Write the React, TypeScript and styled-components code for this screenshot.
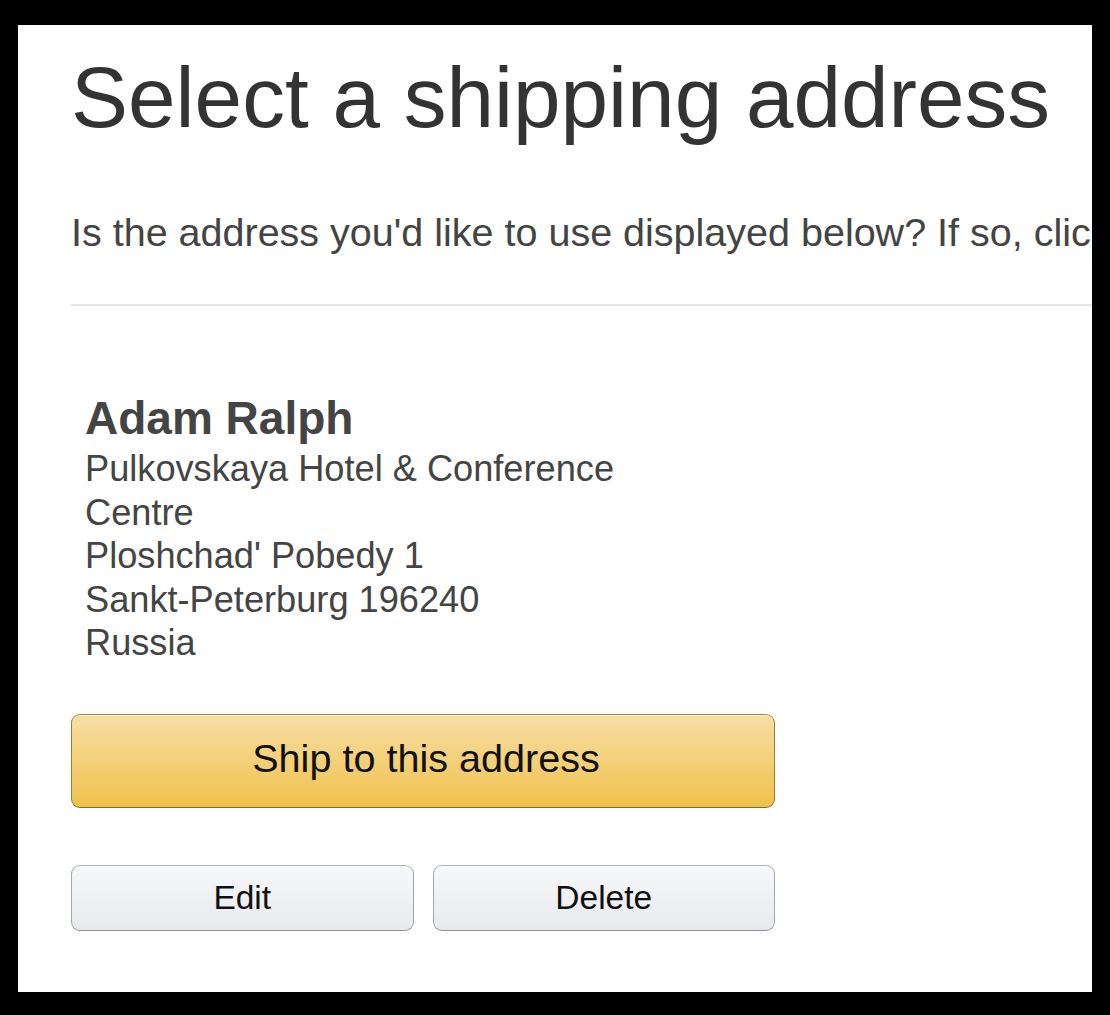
import styled, { createGlobalStyle } from "styled-components";

const GlobalStyle = createGlobalStyle`
  html,
  body {
    margin: 0;
    padding: 0;
    background: #000;
  }

  body {
    font-family: "Liberation Sans", Arial, sans-serif;
  }
`;

const Panel = styled.main`
  box-sizing: border-box;
  margin: 25px 18px 0;
  height: 967px;
  background: #fff;
  overflow: hidden;
  padding: 22px 0 0 53px;
`;

const Title = styled.h1`
  margin: 0;
  font-size: 85.5px;
  line-height: 102px;
  font-weight: 400;
  color: #333;
  white-space: nowrap;
`;

/* the intro runs past the right edge of the panel and is clipped there */
const Intro = styled.p`
  margin: 60px 0 0;
  font-size: 39.5px;
  line-height: 46px;
  color: #444;
  white-space: nowrap;
`;

const Divider = styled.hr`
  margin: 49px 0 0;
  border: 0;
  height: 2px;
  background: #e7e7e7;
`;

const AddressCard = styled.section`
  margin-top: 85px;
  width: 704px;
`;

const Address = styled.div`
  padding-left: 14px;
  color: #444;
`;

const Name = styled.div`
  font-size: 46px;
  line-height: 54px;
  font-weight: 700;
  margin-bottom: 2px;
`;

const Line = styled.div`
  font-size: 36.2px;
  line-height: 43.6px;
`;

const Button = styled.button<{ $primary?: boolean }>`
  box-sizing: border-box;
  display: flex;
  align-items: center;
  justify-content: center;
  width: 100%;
  margin: 0;
  font-family: inherit;
  color: #111;
  border-radius: 9px;
  border: 1px solid;
  cursor: pointer;
  box-shadow: 0 1px 0 rgba(255, 255, 255, 0.6) inset;
  height: ${(p) => (p.$primary ? "94px" : "66px")};
  font-size: ${(p) => (p.$primary ? "39.6px" : "33.5px")};
  padding: ${(p) => (p.$primary ? "0 0 4px 6px" : "0")};
  border-color: ${(p) =>
    p.$primary ? "#a88734 #9c7e31 #846a29" : "#adb1b8 #a2a6ac #8d9096"};
  background: ${(p) =>
    p.$primary
      ? "linear-gradient(to bottom, #f7dfa5, #f0c14b)"
      : "linear-gradient(to bottom, #f7f8fa, #e7e9ec)"};
`;

const ShipRow = styled.div`
  margin-top: 49px;
`;

const ActionRow = styled.div`
  margin-top: 57px;
  display: grid;
  grid-template-columns: 1fr 1fr;
  gap: 19px;
`;

const addressLines = [
  "Pulkovskaya Hotel & Conference",
  "Centre",
  "Ploshchad' Pobedy 1",
  "Sankt-Peterburg 196240",
  "Russia",
];

export default function App() {
  return (
    <>
      <GlobalStyle />
      <Panel>
        <Title>Select a shipping address</Title>
        <Intro>
          Is the address you'd like to use displayed below? If so, click the
          corresponding "Ship to this address" button.
        </Intro>
        <Divider />
        <AddressCard>
          <Address>
            <Name>Adam Ralph</Name>
            {addressLines.map((line) => (
              <Line key={line}>{line}</Line>
            ))}
          </Address>
          <ShipRow>
            <Button $primary>Ship to this address</Button>
          </ShipRow>
          <ActionRow>
            <Button>Edit</Button>
            <Button>Delete</Button>
          </ActionRow>
        </AddressCard>
      </Panel>
    </>
  );
}
